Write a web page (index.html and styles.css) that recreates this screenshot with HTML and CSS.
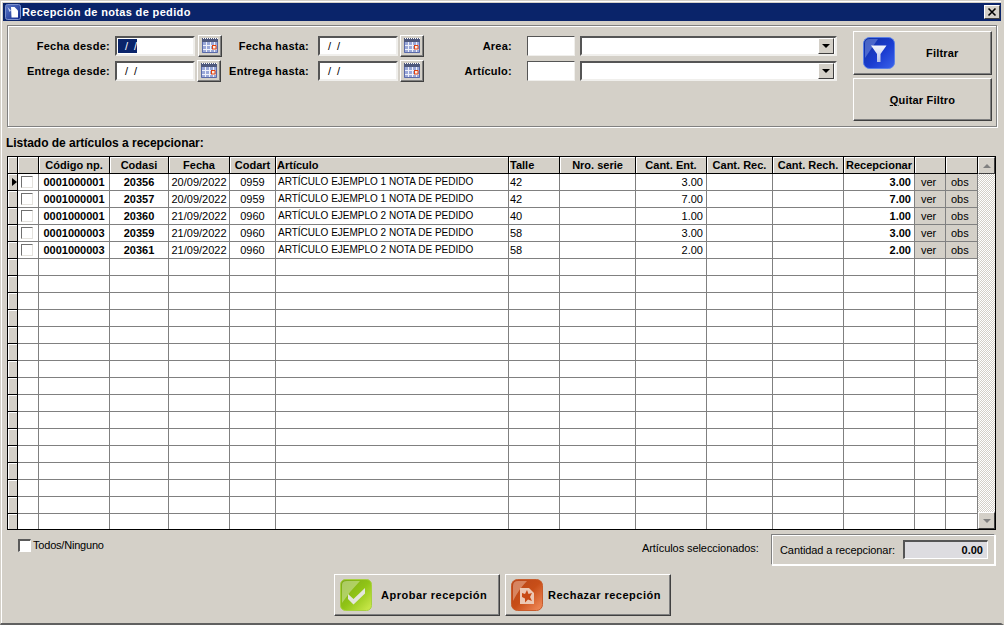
FILE: index.html
```html
<!DOCTYPE html>
<html lang="es">
<head>
<meta charset="utf-8">
<title>Recepción de notas de pedido</title>
<link rel="stylesheet" href="styles.css">
</head>
<body>
<div class="window">
  <header class="titlebar">
    <svg class="title-icon" width="16" height="16" viewBox="0 0 16 16"><defs><linearGradient id="tb" x1="0" y1="0" x2="1" y2="1"><stop offset="0" stop-color="#5a78c8"/><stop offset="1" stop-color="#10288c"/></linearGradient></defs><rect x="0.5" y="0.5" width="15" height="15" rx="2" fill="url(#tb)" stroke="#7c90cc"/><path d="M6 3 L9.500 3 L13 6.500 L13 13.500 L6.500 13.500 Z" fill="#fff"/><path d="M2.500 3 L6 6.500 L4.500 8 Z" fill="#c4d0f0"/></svg>
    <span class="title-text">Recepción de notas de pedido</span>
    <span class="close">
      <svg width="10" height="10" viewBox="0 0 10 10"><path d="M1.500 1.500 L8.500 8.500 M8.500 1.500 L1.500 8.500" stroke="#000" stroke-width="1.6"/></svg>
    </span>
  </header>

  <section class="filters">
    <div class="fields">
      <div class="frow">
        <label class="lbl lbl-a">Fecha desde:</label>
        <div class="field date"><span class="sel">/ /</span></div>
        <button class="cal cal-shift">
          <svg width="20" height="18" viewBox="0 0 20 18"><use href="#calicon"/></svg>
        </button>
        <label class="lbl lbl-b">Fecha hasta:</label>
        <div class="field date"><span class="slashes">/ /</span></div>
        <button class="cal cal-b">
          <svg width="20" height="18" viewBox="0 0 20 18"><use href="#calicon"/></svg>
        </button>
        <label class="lbl lbl-c">Area:</label>
        <div class="field code"></div>
        <div class="field combo"><span class="drop"><i class="tri"></i></span></div>
      </div>
      <div class="frow">
        <label class="lbl lbl-a">Entrega desde:</label>
        <div class="field date"><span class="slashes">/ /</span></div>
        <button class="cal">
          <svg width="20" height="18" viewBox="0 0 20 18"><use href="#calicon"/></svg>
        </button>
        <label class="lbl lbl-b2">Entrega hasta:</label>
        <div class="field date"><span class="slashes">/ /</span></div>
        <button class="cal cal-b">
          <svg width="20" height="18" viewBox="0 0 20 18"><use href="#calicon"/></svg>
        </button>
        <label class="lbl lbl-c">Artículo:</label>
        <div class="field code"></div>
        <div class="field combo"><span class="drop"><i class="tri"></i></span></div>
      </div>
    </div>
    <div class="filter-actions">
      <button class="btn btn-filter">
        <svg width="32" height="32" viewBox="0 0 32 32"><defs><linearGradient id="bl" x1="0" y1="0" x2="1" y2="1"><stop offset="0" stop-color="#10309c"/><stop offset="0.55" stop-color="#1a3cd0"/><stop offset="1" stop-color="#3a62ec"/></linearGradient><linearGradient id="fw" x1="0" y1="0" x2="0" y2="1"><stop offset="0" stop-color="#f4f6fc"/><stop offset="1" stop-color="#b4c0e8"/></linearGradient></defs><rect x="0.5" y="0.5" width="31" height="31" rx="6" fill="url(#bl)" stroke="#5a80e8"/><path d="M2 6 Q2 2 7 2 L15 2 Q8 12 2 21 Z" fill="#8ea4e8" opacity=".45"/><path d="M8 8.500 L23.500 8.500 L17.500 17 L17.500 25 L14 25 L14 17 Z" fill="url(#fw)"/></svg>
        <span class="filter-label">Filtrar</span>
      </button>
      <button class="btn btn-plain"><span><u>Q</u>uitar Filtro</span></button>
    </div>
  </section>

  <h2 class="list-title">Listado de artículos a recepcionar:</h2>

  <div class="grid">
    <table class="tbl">
      <colgroup>
        <col class="c1"><col class="c2"><col class="c3"><col class="c4"><col class="c5"><col class="c6"><col class="c7"><col class="c8"><col class="c9"><col class="c10"><col class="c11"><col class="c12"><col class="c13"><col class="c14"><col class="c15">
      </colgroup>
      <thead>
        <tr><th></th><th></th><th>Código np.</th><th>Codasi</th><th>Fecha</th><th>Codart</th><th class="l">Artículo</th><th class="l">Talle</th><th>Nro. serie</th><th>Cant. Ent.</th><th>Cant. Rec.</th><th>Cant. Rech.</th><th>Recepcionar</th><th></th><th></th></tr>
      </thead>
      <tbody>
        <tr><td class="ind"><i class="arrow"></i></td><td class="ck"><span class="box"></span></td><td class="b c">0001000001</td><td class="b c">20356</td><td class="c">20/09/2022</td><td class="c">0959</td><td class="art">ARTÍCULO EJEMPLO 1 NOTA DE PEDIDO</td><td class="t">42</td><td></td><td class="r">3.00</td><td></td><td></td><td class="b r">3.00</td><td class="gr">ver</td><td class="gr">obs</td></tr>
        <tr><td class="ind"></td><td class="ck"><span class="box"></span></td><td class="b c">0001000001</td><td class="b c">20357</td><td class="c">20/09/2022</td><td class="c">0959</td><td class="art">ARTÍCULO EJEMPLO 1 NOTA DE PEDIDO</td><td class="t">42</td><td></td><td class="r">7.00</td><td></td><td></td><td class="b r">7.00</td><td class="gr">ver</td><td class="gr">obs</td></tr>
        <tr><td class="ind"></td><td class="ck"><span class="box"></span></td><td class="b c">0001000001</td><td class="b c">20360</td><td class="c">21/09/2022</td><td class="c">0960</td><td class="art">ARTÍCULO EJEMPLO 2 NOTA DE PEDIDO</td><td class="t">40</td><td></td><td class="r">1.00</td><td></td><td></td><td class="b r">1.00</td><td class="gr">ver</td><td class="gr">obs</td></tr>
        <tr><td class="ind"></td><td class="ck"><span class="box"></span></td><td class="b c">0001000003</td><td class="b c">20359</td><td class="c">21/09/2022</td><td class="c">0960</td><td class="art">ARTÍCULO EJEMPLO 2 NOTA DE PEDIDO</td><td class="t">58</td><td></td><td class="r">3.00</td><td></td><td></td><td class="b r">3.00</td><td class="gr">ver</td><td class="gr">obs</td></tr>
        <tr><td class="ind"></td><td class="ck"><span class="box"></span></td><td class="b c">0001000003</td><td class="b c">20361</td><td class="c">21/09/2022</td><td class="c">0960</td><td class="art">ARTÍCULO EJEMPLO 2 NOTA DE PEDIDO</td><td class="t">58</td><td></td><td class="r">2.00</td><td></td><td></td><td class="b r">2.00</td><td class="gr">ver</td><td class="gr">obs</td></tr>
        <tr><td class="ind"></td><td></td><td></td><td></td><td></td><td></td><td></td><td></td><td></td><td></td><td></td><td></td><td></td><td></td><td></td></tr>
        <tr><td class="ind"></td><td></td><td></td><td></td><td></td><td></td><td></td><td></td><td></td><td></td><td></td><td></td><td></td><td></td><td></td></tr>
        <tr><td class="ind"></td><td></td><td></td><td></td><td></td><td></td><td></td><td></td><td></td><td></td><td></td><td></td><td></td><td></td><td></td></tr>
        <tr><td class="ind"></td><td></td><td></td><td></td><td></td><td></td><td></td><td></td><td></td><td></td><td></td><td></td><td></td><td></td><td></td></tr>
        <tr><td class="ind"></td><td></td><td></td><td></td><td></td><td></td><td></td><td></td><td></td><td></td><td></td><td></td><td></td><td></td><td></td></tr>
        <tr><td class="ind"></td><td></td><td></td><td></td><td></td><td></td><td></td><td></td><td></td><td></td><td></td><td></td><td></td><td></td><td></td></tr>
        <tr><td class="ind"></td><td></td><td></td><td></td><td></td><td></td><td></td><td></td><td></td><td></td><td></td><td></td><td></td><td></td><td></td></tr>
        <tr><td class="ind"></td><td></td><td></td><td></td><td></td><td></td><td></td><td></td><td></td><td></td><td></td><td></td><td></td><td></td><td></td></tr>
        <tr><td class="ind"></td><td></td><td></td><td></td><td></td><td></td><td></td><td></td><td></td><td></td><td></td><td></td><td></td><td></td><td></td></tr>
        <tr><td class="ind"></td><td></td><td></td><td></td><td></td><td></td><td></td><td></td><td></td><td></td><td></td><td></td><td></td><td></td><td></td></tr>
        <tr><td class="ind"></td><td></td><td></td><td></td><td></td><td></td><td></td><td></td><td></td><td></td><td></td><td></td><td></td><td></td><td></td></tr>
        <tr><td class="ind"></td><td></td><td></td><td></td><td></td><td></td><td></td><td></td><td></td><td></td><td></td><td></td><td></td><td></td><td></td></tr>
        <tr><td class="ind"></td><td></td><td></td><td></td><td></td><td></td><td></td><td></td><td></td><td></td><td></td><td></td><td></td><td></td><td></td></tr>
        <tr><td class="ind"></td><td></td><td></td><td></td><td></td><td></td><td></td><td></td><td></td><td></td><td></td><td></td><td></td><td></td><td></td></tr>
        <tr><td class="ind"></td><td></td><td></td><td></td><td></td><td></td><td></td><td></td><td></td><td></td><td></td><td></td><td></td><td></td><td></td></tr>
        <tr><td class="ind"></td><td></td><td></td><td></td><td></td><td></td><td></td><td></td><td></td><td></td><td></td><td></td><td></td><td></td><td></td></tr>
      </tbody>
    </table>
    <div class="scroll">
      <span class="sbtn"><i class="stri up"></i></span>
      <span class="strack"></span>
      <span class="sbtn"><i class="stri down"></i></span>
    </div>
  </div>

  <div class="summary">
    <div class="todos"><span class="box box-lg"></span><span class="todos-text">Todos/Ninguno</span></div>
    <span class="selected">Artículos seleccionados:</span>
    <div class="qty-box">
      <span class="qty-label">Cantidad a recepcionar:</span>
      <div class="qty-field">0.00</div>
    </div>
  </div>

  <div class="actions">
    <button class="btn btn-act btn-ok">
      <svg width="32" height="32" viewBox="0 0 32 32"><defs><linearGradient id="gr" x1="0" y1="0" x2="1" y2="1"><stop offset="0" stop-color="#7ca818"/><stop offset="0.5" stop-color="#90c416"/><stop offset="1" stop-color="#d0ec50"/></linearGradient></defs><rect x="0.5" y="0.5" width="31" height="31" rx="5" fill="url(#gr)" stroke="#a8d040"/><path d="M2 6 Q2 2 7 2 L20 2 Q10 12 2 24 Z" fill="#d8e8b0" opacity=".5"/><path d="M8 15 L13.500 20 L25 9 L25 14.500 L13.500 25.500 L8 20 Z" fill="#e4e6dc"/></svg>
      <span>Aprobar recepción</span>
    </button>
    <button class="btn btn-act btn-no">
      <svg width="32" height="32" viewBox="0 0 32 32"><defs><linearGradient id="or" x1="0" y1="0" x2="1" y2="1"><stop offset="0" stop-color="#b8451a"/><stop offset="0.5" stop-color="#c84e18"/><stop offset="1" stop-color="#f49060"/></linearGradient></defs><rect x="0.5" y="0.5" width="31" height="31" rx="6" fill="url(#or)" stroke="#c85c2c"/><path d="M2 7 Q2 2 7 2 L16 2 Q8 10 2 22 Z" fill="#f0c0a8" opacity=".5"/><path d="M9 9 L18 9 L23 14 L23 25 L9 25 Z" fill="#ecc8b4"/><path d="M11 14 L14 15 L16 11 L17.500 15 L21 14 L19 18 L21 22 L17 20.500 L14 23.500 L14 19.500 L11 18 Z" fill="#c84a14"/></svg>
      <span>Rechazar recepción</span>
    </button>
  </div>
</div>

<svg class="defs" width="0" height="0">
  <defs>
    <g id="calicon">
      <rect x="2" y="1" width="16" height="15" fill="#9aa8d8"/>
      <rect x="2" y="1" width="16" height="4" fill="#4e587c"/>
      <path d="M3 1.500h15" stroke="#fff" stroke-dasharray="1 1"/>
      <path d="M2 8.500h16M2 12.500h16M6.500 5v11M10.500 5v11M14.500 5v11" stroke="#eef0fa"/>
      <path d="M2.500 5v10.500h15V5" fill="none" stroke="#5a6aa8"/>
      <rect x="12.500" y="8.500" width="3.500" height="3.500" fill="#fbeee0" stroke="#e04010"/>
    </g>
  </defs>
</svg>
</body>
</html>
```

FILE: styles.css
```css
* { box-sizing: border-box; }
html, body { margin: 0; padding: 0; }
body { width: 1004px; height: 625px; overflow: hidden; background: #d4d0c8; font-family: "Liberation Sans", Arial, sans-serif; font-size: 11px; color: #000; }
button { font: inherit; color: inherit; padding: 0; margin: 0; }
.defs { position: absolute; }

.window { width: 1004px; height: 625px; display: flex; flex-direction: column; background: #d4d0c8; border-style: solid; border-width: 1px 3px 2px 1px; border-color: #d4d0c8 #d4d0c8 #606060 #d4d0c8; box-shadow: inset 1px 1px 0 #fff; padding-top: 2px; padding-left: 2px; }

.titlebar { height: 18px; background: #0a246a; color: #fff; display: flex; align-items: center; padding: 0 1px 0 2px; flex: none; }
.title-icon { flex: none; }
.title-text { font-weight: bold; font-size: 11px; letter-spacing: .35px; margin-left: 1px; flex: 1; }
.close { width: 16px; height: 14px; background: #d4d0c8; border: 1px solid; border-color: #fff #404040 #404040 #fff; display: flex; align-items: center; justify-content: center; }

.filters { height: 102px; margin: 4px 4px 0 4px; width: 990px; border: 1px solid #808080; box-shadow: 1px 1px 0 #fff, inset 1px 1px 0 #fff; display: flex; flex: none; padding: 5px 4px 0 1px; }
.fields { flex: 1; padding-top: 4px; display: flex; flex-direction: column; gap: 3px; }
.frow { display: flex; align-items: center; height: 22px; }
.lbl { font-weight: bold; text-align: right; letter-spacing: .25px; white-space: nowrap; flex: none; }
.lbl-a { width: 101px; margin-right: 5px; }
.lbl-b { width: 87px; margin-right: 9px; }
.lbl-b2 { width: 88px; margin-right: 9px; }
.lbl-c { width: 88px; margin-right: 15px; }

.field { background: #fff; height: 20px; flex: none; border: 2px solid; border-color: #555 #f0efec #f0efec #555; display: flex; align-items: center; }
.date { width: 80px; }
.slashes { margin-left: 8px; letter-spacing: 1.5px; }
.sel { background: #0a246a; color: #fff; height: 14px; width: 19px; padding-left: 7px; letter-spacing: 1.5px; line-height: 14px; margin-left: 1px; white-space: nowrap; }
.code { width: 48px; border-width: 1px; }
.combo { width: 257px; margin-left: 5px; justify-content: flex-end; padding-right: 1px; }
.drop { width: 16px; height: 16px; background: #d4d0c8; border: 1px solid; border-color: #fff #404040 #404040 #fff; display: flex; align-items: center; justify-content: center; }
.tri { width: 0; height: 0; border-left: 4px solid transparent; border-right: 4px solid transparent; border-top: 4px solid #000; }

.cal { width: 24px; height: 22px; margin-left: 2px; background: #d4d0c8; border: 1px solid; border-color: #fff #404040 #404040 #fff; box-shadow: inset -1px -1px 0 #808080; display: flex; align-items: center; justify-content: center; flex: none; }
.cal-shift { margin-left: 3px; }
.cal-b { margin-left: 2px; }

.filter-actions { width: 139px; flex: none; display: flex; flex-direction: column; gap: 3px; }
.btn { background: #d4d0c8; border: 1px solid; border-color: #fff #404040 #404040 #fff; box-shadow: inset -1px -1px 0 #808080; font-weight: bold; letter-spacing: .2px; }
.btn-filter { height: 44px; display: flex; align-items: center; padding: 0 0 0 9px; }
.filter-label { margin-left: 31px; }
.btn-plain { height: 43px; }

.list-title { margin: 0; padding: 9px 0 0 3px; height: 29px; font-size: 12px; font-weight: bold; line-height: 14px; letter-spacing: -.03px; flex: none; }

.grid { margin-left: 4px; width: 989px; height: 374px; border: 1px solid #000; flex: none; display: flex; background: #fff; overflow: hidden; }
.tbl { border-collapse: separate; border-spacing: 0; table-layout: fixed; width: 970px; flex: none; align-self: flex-start; }
.c1 { width: 10px; } .c2 { width: 21px; } .c3 { width: 71px; } .c4 { width: 59px; } .c5 { width: 61px; }
.c6 { width: 46px; } .c7 { width: 233px; } .c8 { width: 51px; } .c9 { width: 76px; } .c10 { width: 71px; }
.c11 { width: 66px; } .c12 { width: 71px; } .c13 { width: 71px; } .c14 { width: 31px; } .c15 { width: 32px; }

th { height: 17px; padding: 0 1px; background: #d4d0c8; border-right: 1px solid #000; border-bottom: 1px solid #000; box-shadow: inset 1px 1px 0 #fff; font-weight: bold; text-align: center; white-space: nowrap; overflow: hidden; line-height: 14px; }
th.l { text-align: left; }
td { height: 17px; padding: 0 2px; border-right: 1px solid #808080; border-bottom: 1px solid #808080; white-space: nowrap; overflow: hidden; line-height: 14px; font-size: 11px; }
td.b { font-weight: bold; }
td.c { text-align: center; }
td.r { text-align: right; padding-right: 3px; }
td.art { font-size: 10px; }
td.t { padding-left: 1px; }
td.gr { background: #d4d0c8; padding-left: 6px; }
td.gr + td.gr { padding-left: 5px; }
td.ind { background: #d4d0c8; border-right-color: #000; border-bottom-color: #000; box-shadow: inset 1px 1px 0 #fff; padding: 0; }
td.ck { padding: 0 0 0 3px; }
.arrow { display: block; width: 0; height: 0; margin-left: 4px; border-top: 4px solid transparent; border-bottom: 4px solid transparent; border-left: 5px solid #000; }
.box { display: block; width: 12px; height: 12px; background: #fff; border: 1px solid; border-color: #707070 #e4e2dd #e4e2dd #707070; }

.scroll { width: 17px; flex: none; display: flex; flex-direction: column; }
.sbtn { height: 17px; flex: none; background: #d4d0c8; border: 1px solid; border-color: #fff #404040 #404040 #fff; display: flex; align-items: center; justify-content: center; }
.strack { flex: 1; background: repeating-conic-gradient(#d4d0c8 0 25%, #fff 0 50%) 0 0 / 2px 2px; }
.stri { width: 0; height: 0; border-left: 4px solid transparent; border-right: 4px solid transparent; }
.stri.up { border-bottom: 4px solid #808080; }
.stri.down { border-top: 4px solid #808080; }

.summary { height: 44px; flex: none; display: flex; align-items: flex-start; padding-top: 4px; }
.todos { display: flex; align-items: center; gap: 2px; margin: 5px 0 0 15px; width: 624px; height: 12px; flex: none; }
.todos-text { letter-spacing: -.2px; }
.box-lg { width: 13px; height: 13px; border-width: 2px 1px 1px 2px; border-color: #5a5a5a #fff #fff #5a5a5a; }
.selected { margin: 7px 0 0 0; width: 120px; flex: none; white-space: nowrap; line-height: 14px; letter-spacing: -.08px; }
.qty-box { margin-left: 9px; width: 224px; height: 31px; border: 1px solid; border-color: #808080 #fff #fff #808080; box-shadow: inset 1px 1px 0 #fff, 1px 1px 0 #fff; display: flex; align-items: center; padding-left: 8px; flex: none; white-space: nowrap; }
.qty-label { letter-spacing: -.08px; }
.qty-field { margin-left: 8px; width: 85px; height: 19px; background: #dddce0; border: 1px solid; border-width: 2px 1px 1px 2px; border-color: #555 #fff #fff #555; font-weight: bold; text-align: right; padding-right: 4px; line-height: 16px; }

.actions { display: flex; justify-content: center; gap: 5px; flex: none; padding-left: 1px; }
.btn-act { height: 42px; display: flex; align-items: center; letter-spacing: .5px; }
.btn-ok { width: 166px; padding-left: 5px; gap: 9px; }
.btn-no { width: 166px; padding-left: 5px; gap: 5px; }
```
